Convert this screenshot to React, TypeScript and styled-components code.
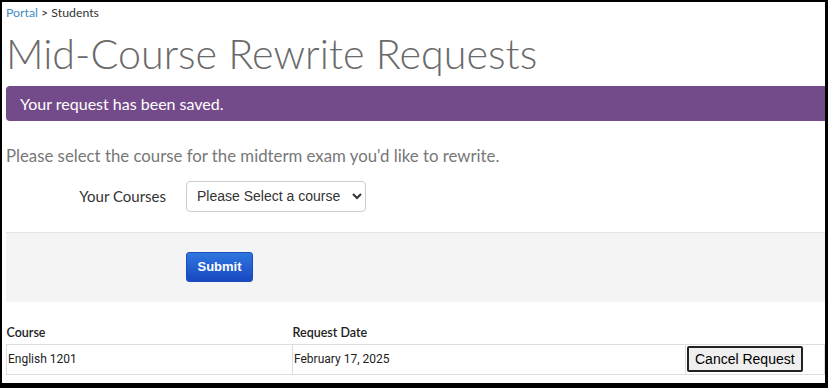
import React from "react";
import styled, { createGlobalStyle } from "styled-components";

const Global = createGlobalStyle`
  html, body { margin: 0; padding: 0; background: #000; }
  body { width: 828px; height: 388px; overflow: hidden; font-family: "Lato", "Open Sans", sans-serif; }
  * { box-sizing: border-box; }
`;

const Frame = styled.div`
  width: 828px;
  height: 388px;
  border-style: solid;
  border-color: #000;
  border-width: 2px 3px 5px 2px;
  background: #fff;
  overflow: hidden;
`;

const Page = styled.div`
  padding: 0 0 0 4px;
  display: flex;
  flex-direction: column;
`;

const Breadcrumb = styled.div`
  font-size: 12.3px;
  color: #333;
  line-height: 20px;
  height: 22px;
  padding-top: 1px;
`;

const Crumb = styled.a`
  color: #3d8ac6;
  text-decoration: none;
`;

const Title = styled.h1`
  margin: 0 0 4px;
  font-size: 41.3px;
  font-weight: 300;
  color: #6a6a6a;
  line-height: 58px;
`;

const Banner = styled.div`
  background: #744b8a;
  color: #fff;
  font-size: 16px;
  height: 35px;
  line-height: 35px;
  padding-left: 14px;
  border-radius: 4px 0 0 4px;
`;

const Intro = styled.p`
  margin: 24px 0 0;
  font-size: 16.8px;
  color: #777;
  line-height: 22px;
`;

const FormRow = styled.div`
  display: grid;
  grid-template-columns: 180px auto;
  align-items: center;
  margin-top: 13px;
  height: 32px;
`;

const Label = styled.label`
  font-size: 15px;
  color: #333;
  text-align: right;
  padding-right: 20px;
`;

const Select = styled.select`
  width: 180px;
  height: 31px;
  border: 1px solid #ccc;
  border-radius: 4px;
  background: #fff;
  font-family: "Liberation Sans", Arial, sans-serif;
  font-size: 14px;
  color: #333;
  padding: 0 6px;
`;

const ActionBar = styled.div`
  margin-top: 20px;
  height: 70px;
  background: #f4f4f4;
  border-top: 1px solid #e3e3e3;
  display: grid;
  grid-template-columns: 180px auto;
  align-items: center;
`;

const SubmitButton = styled.button`
  grid-column: 2;
  justify-self: start;
  width: 67px;
  height: 30px;
  border: 1px solid #1b4fb8;
  border-radius: 3px;
  background: linear-gradient(#2f77de, #1848c2);
  color: #fff;
  font-family: "Liberation Sans", Arial, sans-serif;
  font-weight: bold;
  font-size: 13px;
  margin-top: -2px;
`;

const Table = styled.table`
  margin-top: 22px;
  border-collapse: collapse;
  width: 100%;
  font-size: 12.5px;
  color: #222;
`;

const Th = styled.th<{ $w?: number }>`
  text-align: left;
  font-weight: 600;
  padding: 0 0 4px 0;
  height: 20px;
  vertical-align: bottom;
  width: ${(p) => (p.$w ? `${p.$w}px` : "auto")};
`;

const Td = styled.td`
  border: 1px solid #ddd;
  height: 30px;
  padding: 0 1px;
  font-family: "Roboto", sans-serif;
  font-size: 12px;
  color: #222;
`;

const CancelButton = styled.button`
  font-family: "Liberation Sans", Arial, sans-serif;
  font-size: 14px;
  color: #000;
  background: #efefef;
  border: 2px solid #222;
  border-radius: 2px;
  height: 26px;
  padding: 0 6px;
`;

export default function App() {
  return (
    <>
      <Global />
      <Frame>
        <Page>
          <Breadcrumb>
            <Crumb href="#">Portal</Crumb> &gt; Students
          </Breadcrumb>
          <Title>Mid-Course Rewrite Requests</Title>
          <Banner>Your request has been saved.</Banner>
          <Intro>Please select the course for the midterm exam you'd like to rewrite.</Intro>
          <FormRow>
            <Label>Your Courses</Label>
            <Select defaultValue="">
              <option value="">Please Select a course</option>
            </Select>
          </FormRow>
          <ActionBar>
            <SubmitButton>Submit</SubmitButton>
          </ActionBar>
          <Table>
            <thead>
              <tr>
                <Th $w={286}>Course</Th>
                <Th $w={393}>Request Date</Th>
                <Th />
              </tr>
            </thead>
            <tbody>
              <tr>
                <Td>English 1201</Td>
                <Td>February 17, 2025</Td>
                <Td>
                  <CancelButton>Cancel Request</CancelButton>
                </Td>
              </tr>
            </tbody>
          </Table>
        </Page>
      </Frame>
    </>
  );
}
